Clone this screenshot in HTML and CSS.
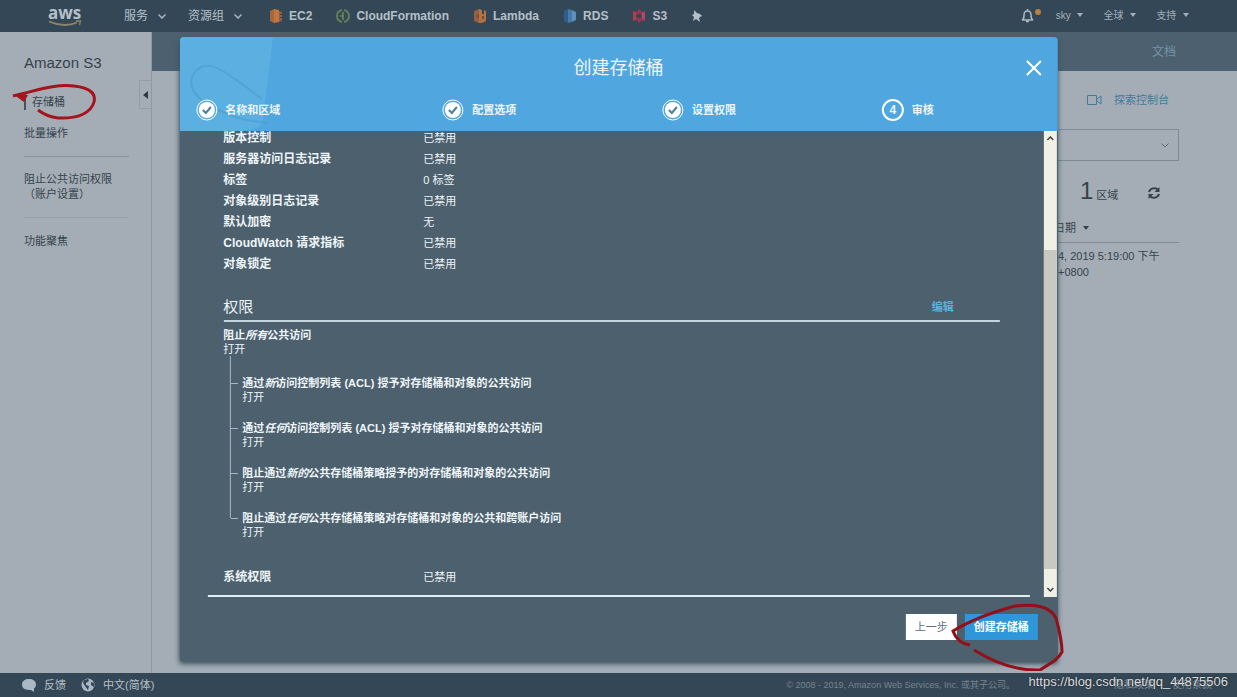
FILE: index.html
```html
<!DOCTYPE html>
<html lang="zh-CN">
<head>
<meta charset="utf-8">
<title>Amazon S3</title>
<link rel="stylesheet" href="styles.css">
</head>
<body>
<header class="topnav">
  <a class="logo" href="#" aria-label="aws"><span>aws</span>
    <svg width="34" height="7" viewBox="0 0 34 7"><path d="M1 1.500Q16 8 29 2.500" fill="none" stroke="#8f8468" stroke-width="1.800"/><path d="M28 1h4.500l-1 4" fill="none" stroke="#8f8468" stroke-width="1.300"/></svg></a>
  <button class="nav-menu">服务 <svg width="8" height="5" viewBox="0 0 8 5"><path d="M.5.5 4 4 7.500.5" class="line"/></svg></button>
  <button class="nav-menu">资源组 <svg width="8" height="5" viewBox="0 0 8 5"><path d="M.5.5 4 4 7.500.5" class="line"/></svg></button>
  <nav class="services">
    <a href="#"><svg width="14" height="14" viewBox="0 0 14 14"><path d="M1 2l4-2v14l-4-2z" fill="#a5673b"/><path d="M5 0l5 1v12l-5 1z" fill="#c0763c"/><path d="M10 2l3 1v2h-2v1h2v2h-2v1h2v3l-3 1z" fill="#8c6048"/></svg>EC2</a>
    <a href="#"><svg width="14" height="14" viewBox="0 0 14 14"><path d="M6 1C2 2 1 4 1 7s1 5 5 6M8 1c4 1 5 3 5 6s-1 5-5 6" fill="none" stroke="#5e7e58" stroke-width="2"/><path d="M7 3v8M4 7h3" stroke="#6d8a5f" stroke-width="1.500"/></svg>CloudFormation</a>
    <a href="#"><svg width="14" height="14" viewBox="0 0 14 14"><path d="M1 2l5-2v14l-5-2z" fill="#945f40"/><path d="M6 0l3 1v4h2V1l2 1v10l-4 2H6z" fill="#b3723f"/><path d="M4 5h2v4H4zM9 7h2v3H9z" fill="#74503f"/></svg>Lambda</a>
    <a href="#"><svg width="14" height="14" viewBox="0 0 14 14"><path d="M1 2l4-2v14l-4-2z" fill="#315d88"/><path d="M5 0l4 1v12l-4 1z" fill="#437bac"/><path d="M9 1l4 2v8l-4 2z" fill="#5d91ba"/></svg>RDS</a>
    <a href="#"><svg width="14" height="14" viewBox="0 0 14 14"><path d="M1 2l3 1v8l-3 1zM13 2l-3 1v8l3 1z" fill="#a84356"/><path d="M4 3l3-3v5L4 6zM7 5l3 1V3L7 0zM4 8l3 1v5l-3-3zM10 8L7 9v5l3-3z" fill="#92384e"/><path d="M10 4h2v5h-2z" fill="#b34a7d"/></svg>S3</a>
    <a href="#" aria-label="固定"><svg width="12" height="12" viewBox="0 0 12 12"><path d="M3 0l3 3 3 1 2 2-2 1-1 1 1 4-4-3-3 2 1-4L1 5l2-1z" fill="#b4c0c8"/></svg></a>
  </nav>
  <div class="account">
    <button class="bell" aria-label="通知"><svg width="22" height="16" viewBox="0 0 22 16"><path d="M2 12h11c-2-1-2-3-2-5 0-3-1-4-3.500-4S4 4 4 7s0 4-2 5zM6 13.500h3M7.500 1v2" fill="none" stroke="#a8b6bf" stroke-width="1.500"/><circle cx="18" cy="4" r="3" fill="#b6803f"/></svg></button>
    <button>sky <i class="caret"></i></button>
    <button>全球 <i class="caret"></i></button>
    <button>支持 <i class="caret"></i></button>
  </div>
</header>

<div class="page">
  <aside class="sidebar">
    <h1>Amazon S3</h1>
    <a class="current" href="#">存储桶</a>
    <a href="#">批量操作</a>
    <hr>
    <a class="two-line" href="#">阻止公共访问权限<br>（账户设置）</a>
    <hr class="faint">
    <a href="#">功能聚焦</a>
    <button class="collapse" aria-label="收起"><svg width="5" height="8" viewBox="0 0 5 8"><path d="M5 0v8L0 4z" fill="#2d3b45"/></svg></button>
  </aside>
  <main class="main">
    <div class="docbar"><a href="#">文档</a></div>
    <div class="panel">
      <a class="explore" href="#"><svg width="15" height="10" viewBox="0 0 15 10"><path d="M.5.5h9v9h-9zM10 4l4-3v8l-4-3" fill="none" stroke="#45799a"/></svg>探索控制台</a>
      <div class="filter"><svg width="8" height="5" viewBox="0 0 8 5"><path d="M.5.5 4 4 7.500.5" fill="none" stroke="#5c6870"/></svg></div>
      <div class="count"><b>1</b><span>区域</span>
        <button aria-label="刷新"><svg width="12" height="12" viewBox="0 0 12 12"><path d="M1 5c1-4 7-5 9-2M11 7c-1 4-7 5-9 2" fill="none" stroke="#34424b" stroke-width="2"/><path d="M11.500 0v5h-5zM.5 12V7h5z" fill="#34424b"/></svg></button></div>
      <table class="buckets">
        <thead><tr><th>日期 <i class="caret"></i></th></tr></thead>
        <tbody><tr><td>4, 2019 5:19:00 下午<br>+0800</td></tr></tbody>
      </table>
    </div>
  </main>
</div>

<footer class="footer">
  <a href="#"><svg width="14" height="14" viewBox="0 0 14 14"><path d="M7 1c4 0 7 2 7 5.500 0 2-1 3-2 4V14l-3-2C4 12 0 11 0 6.500 0 3 3 1 7 1z" fill="#a9b8c2"/></svg>反馈</a>
  <a href="#"><svg width="14" height="14" viewBox="0 0 14 14"><circle cx="7" cy="7" r="6.500" fill="#a9b8c2"/><path d="M3 2l4-1 1 2-3 2v2l3 1-1 4-3-4-2-3zM10 4l3 1v4l-3-2z" fill="#344756"/></svg>中文(简体)</a>
  <small>© 2008 - 2019, Amazon Web Services, Inc. 或其子公司。</small>
  <div class="legal"><a href="#">隐私政策</a><a href="#">使用条款</a></div>
</footer>

<section class="modal" role="dialog" aria-modal="true" aria-labelledby="dialog-title">
  <header class="modal-head">
    <svg class="bucket" width="96" height="94" viewBox="0 0 96 94"><path d="M0 0h93l-10 84q-2 10-30 10H0z" fill="#63b5e2" opacity=".6"/><path d="M88 86Q60 84 36 72C14 61 5 47 16 34c12-13 27-2 66 28" fill="none" stroke="#4599cd" stroke-width="2" opacity=".5"/></svg>
    <h2 id="dialog-title">创建存储桶</h2>
    <button class="close" aria-label="关闭"><svg width="16" height="16" viewBox="0 0 16 16"><path d="M1 1l14 14M15 1L1 15" stroke="#fff" stroke-width="2"/></svg></button>
    <ol class="steps">
      <li><svg width="22" height="22" viewBox="0 0 22 22"><circle cx="11" cy="11" r="10" class="ring"/><circle cx="11" cy="11" r="8" fill="#fff"/><path d="M7 11l3 3 5-6" class="tick"/></svg>名称和区域</li>
      <li><svg width="22" height="22" viewBox="0 0 22 22"><circle cx="11" cy="11" r="10" class="ring"/><circle cx="11" cy="11" r="8" fill="#fff"/><path d="M7 11l3 3 5-6" class="tick"/></svg>配置选项</li>
      <li><svg width="22" height="22" viewBox="0 0 22 22"><circle cx="11" cy="11" r="10" class="ring"/><circle cx="11" cy="11" r="8" fill="#fff"/><path d="M7 11l3 3 5-6" class="tick"/></svg>设置权限</li>
      <li><span class="number">4</span>审核</li>
    </ol>
  </header>
  <div class="modal-body">
    <div class="review">
      <dl class="props">
        <dt>版本控制</dt><dd>已禁用</dd>
        <dt>服务器访问日志记录</dt><dd>已禁用</dd>
        <dt>标签</dt><dd>0 标签</dd>
        <dt>对象级别日志记录</dt><dd>已禁用</dd>
        <dt>默认加密</dt><dd>无</dd>
        <dt>CloudWatch 请求指标</dt><dd>已禁用</dd>
        <dt>对象锁定</dt><dd>已禁用</dd>
      </dl>
      <div class="section-head"><h3>权限</h3><a href="#">编辑</a></div>
      <div class="block"><b>阻止<em>所有</em>公共访问</b><span>打开</span></div>
      <ul class="tree">
        <li><b>通过<em>新</em>访问控制列表 (ACL) 授予对存储桶和对象的公共访问</b><span>打开</span></li>
        <li><b>通过<em>任何</em>访问控制列表 (ACL) 授予对存储桶和对象的公共访问</b><span>打开</span></li>
        <li><b>阻止通过<em>新的</em>公共存储桶策略授予的对存储桶和对象的公共访问</b><span>打开</span></li>
        <li><b>阻止通过<em>任何</em>公共存储桶策略对存储桶和对象的公共和跨账户访问</b><span>打开</span></li>
      </ul>
      <dl class="props system"><dt>系统权限</dt><dd>已禁用</dd></dl>
    </div>
    <div class="scrollbar">
      <svg width="7" height="5" viewBox="0 0 7 5"><path d="M.5 4 3.500 1l3 3" fill="none" stroke="#4b4038" stroke-width="1.500"/></svg>
      <div class="thumb"></div>
      <svg width="7" height="5" viewBox="0 0 7 5"><path d="M.5 1l3 3 3-3" fill="none" stroke="#3e4346" stroke-width="1.500"/></svg>
    </div>
  </div>
  <div class="actions"><button class="back">上一步</button><button class="create">创建存储桶</button></div>
</section>

<svg class="mark mark-side" width="88" height="44" viewBox="0 0 88 44"><path d="M4 14C30 8 45 2 65 4c17 2 22 8 20 16-3 11-16 17-36 16-10-1-16-5-20-8" fill="none" stroke="#a5131d" stroke-width="3"/><path d="M4 12l15 1-4 7z" fill="#a5131d"/></svg>
<svg class="mark mark-create" width="118" height="70" viewBox="0 0 118 70"><path d="M22 44c-8-1-14-6-17-14 18-11 40-19 62-25 20-2 35 0 41 12 3 11 6 22 6 34-5 9-13 12-22 18-23 1-45-7-66-20" fill="none" stroke="#93101b" stroke-width="3"/></svg>
<span class="watermark">https://blog.csdn.net/qq_44875506</span>
</body>
</html>
```
FILE: styles.css
```css
* { box-sizing: border-box; }
body {
  margin: 0;
  min-height: 100vh;
  display: flex;
  flex-direction: column;
  position: relative;
  background: #a4adb6;
  color: #34424b;
  font: 11px/16px "Liberation Sans", "Noto Sans CJK SC", sans-serif;
}
button { border: 0; padding: 0; background: none; color: inherit; font: inherit; }
a { color: inherit; text-decoration: none; }
h1, h2, h3, ul, ol, dl, dd { margin: 0; padding: 0; }
ul, ol { list-style: none; }
.line { fill: none; stroke: #a8b6bf; stroke-width: 1.500; }
.caret {
  display: inline-block;
  margin-left: 4px;
  border: 3px solid transparent;
  border-top: 4px solid currentColor;
  border-bottom: 0;
  vertical-align: 2px;
}

.topnav {
  display: flex;
  align-items: center;
  height: 32px;
  padding: 0 48px;
  background: #344756;
  color: #b4c0c8;
  font-size: 12px;
}
.logo { display: flex; flex-direction: column; width: 76px; }
.logo span { font: bold 17px/15px "Open Sans", sans-serif; }
.nav-menu { display: flex; align-items: center; gap: 10px; margin-right: 22px; }
.services { display: flex; align-items: center; gap: 24px; margin-left: 5px; font-weight: bold; }
.services a { display: flex; align-items: center; gap: 6px; }
.account { display: flex; align-items: center; gap: 20px; margin-left: auto; font-size: 10px; color: #a3b0b9; }
.bell { display: flex; margin-right: -6px; }

.page { flex: 1; display: flex; }
.sidebar {
  position: relative;
  width: 152px;
  padding: 20px 22px 0 24px;
  border-right: 1px solid #8d98a2;
}
.sidebar h1 { margin-bottom: 20px; font-size: 15px; line-height: 22px; font-weight: normal; }
.sidebar a { display: block; margin-bottom: 15px; }
.sidebar .current { padding-left: 6px; border-left: 2px solid #45545f; }
.sidebar .two-line { line-height: 15px; }
.sidebar hr { margin: 0 0 15px; border: 0; border-top: 1px solid #87939d; }
.sidebar .faint { border-color: #98a2ac; }
.collapse {
  position: absolute;
  top: 48px;
  right: 0;
  width: 12px;
  height: 29px;
  border: 1px solid #929da7;
  border-right: 0;
}
.main { flex: 1; }
.docbar { height: 39px; padding: 12px 61px 0; background: #4d606f; color: #7296a8; text-align: right; font-size: 12px; }
.panel { width: 128px; margin: 21px 58px 0 auto; }
.explore { display: flex; align-items: center; gap: 12px; margin-left: 36px; color: #45799a; }
.filter {
  display: flex;
  align-items: center;
  justify-content: flex-end;
  height: 32px;
  margin-top: 21px;
  padding-right: 9px;
  border: 1px solid #7e8a94;
}
.count { display: flex; align-items: baseline; gap: 3px; height: 46px; padding: 18px 19px 0 29px; }
.count b { font: 24px/24px "Liberation Sans", sans-serif; }
.count button { margin-left: auto; }
.buckets { width: 100%; margin-top: 7px; border-collapse: collapse; }
.buckets th { height: 28px; padding: 0 0 0 3px; border-bottom: 1px solid #7e8a94; text-align: left; font-weight: normal; }
.buckets td { padding: 5px 0 0 7px; white-space: nowrap; }

.footer {
  display: flex;
  align-items: center;
  gap: 15px;
  height: 24px;
  padding: 0 25px 0 22px;
  background: #344756;
  color: #b4c0c8;
}
.footer a { display: flex; align-items: center; gap: 8px; }
.footer small { margin-left: auto; font-size: 9px; color: #75858f; }
.legal { display: flex; gap: 18px; margin-left: 84px; font-size: 10px; color: #82929d; }

.modal {
  position: absolute;
  top: 37px;
  bottom: 35px;
  left: 50%;
  width: 71%;
  transform: translateX(-50%);
  display: flex;
  flex-direction: column;
  overflow: hidden;
  border-radius: 4px;
  background: #4d606e;
  color: #eef5f8;
  box-shadow: 0 2px 5px #3d535f;
}
.modal-head { position: relative; padding: 18px 16px 10px; background: #50a7df; }
.bucket { position: absolute; top: 0; left: 0; }
.modal-head h2 { position: relative; text-align: center; font-size: 18px; line-height: 26px; font-weight: normal; }
.close { position: absolute; top: 23px; right: 16px; display: flex; }
.steps { position: relative; display: grid; grid-template-columns: 247fr 220fr 220fr 160fr; margin-top: 18px; font-weight: bold; }
.steps li { display: flex; align-items: center; gap: 8px; }
.ring { fill: none; stroke: #fff; }
.tick { fill: none; stroke: #4a8199; stroke-width: 2; }
.number { width: 22px; height: 22px; border: 2px solid #fff; border-radius: 50%; text-align: center; line-height: 18px; font-size: 12px; }
.modal-body { flex: 1; min-height: 0; display: flex; overflow: hidden; }
.review { flex: 1; padding: 0 44px; margin-top: -3px; }
.props { display: grid; grid-template-columns: 200px 1fr; line-height: 21px; }
.props dt { font-size: 12px; font-weight: bold; }
.section-head { display: flex; align-items: center; justify-content: space-between; margin-top: 21px; padding: 0 46px 2px 0; border-bottom: 2px solid #c3d5df; }
.section-head h3 { font-size: 15px; line-height: 22px; font-weight: normal; }
.section-head a { color: #5ab3df; font-weight: bold; }
.block { margin-top: 6px; line-height: 14px; }
.block b, .block span, .tree b, .tree span { display: block; }
.tree { margin-left: 6px; line-height: 14px; }
.tree li { position: relative; height: 45px; padding: 20px 0 0 12px; border-left: 1px solid #a9b8c1; }
.tree li::before { content: ""; position: absolute; left: 0; top: 27px; width: 7px; border-top: 1px solid #a9b8c1; }
.tree li:last-child { height: 27px; }
.system { margin: 40px -30px 0 -16px; padding: 9px 0 7px 16px; border-bottom: 2px solid #e0edf3; }
.scrollbar { display: flex; flex-direction: column; align-items: center; width: 13px; padding: 5px 0; margin-right: 1px; background: #f0f0e7; }
.thumb { width: 13px; height: 319px; margin: auto 0 18px; background: #c8cac1; }
.actions { display: flex; justify-content: flex-end; gap: 8px; padding: 17px 20px 22px; }
.actions button { height: 26px; padding: 0 9px; }
.back { background: #fff; color: #5d7180; }
.create { background: #2f97d9; color: #fff; font-weight: bold; }

.mark { position: absolute; pointer-events: none; }
.mark-side { top: 82px; left: 9px; }
.mark-create { right: 171px; bottom: 26px; }
.watermark { position: absolute; right: 9px; bottom: 7px; color: #d7dcdf; font-size: 13px; text-shadow: 0 0 2px #222; }
```
